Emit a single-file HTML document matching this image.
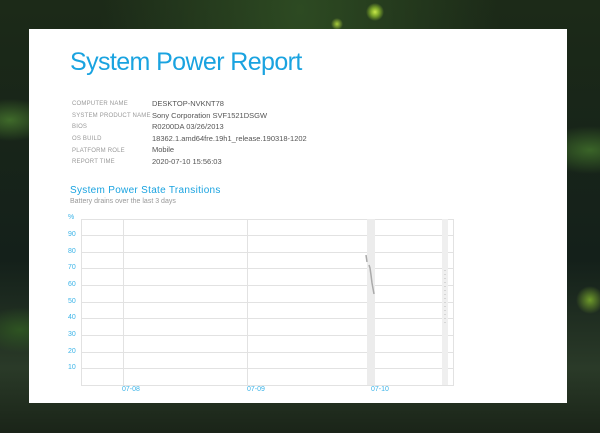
<!DOCTYPE html>
<html><head><style>
body{margin:0;width:600px;height:433px;overflow:hidden;position:relative;font-family:"Liberation Sans",sans-serif;
background:
radial-gradient(circle at 375px 12px,#c8e84a 0,#7fa82a 4px,transparent 9px),
radial-gradient(circle at 337px 24px,#a8cc3a 0,transparent 6px),
radial-gradient(circle at 590px 300px,#6e9a2a 0,transparent 14px),
radial-gradient(ellipse at 10px 120px,#3f6a2a 0,transparent 40px),
radial-gradient(ellipse at 590px 150px,#3a6428 0,transparent 50px),
radial-gradient(ellipse at 20px 330px,#2e5422 0,transparent 40px),
radial-gradient(ellipse at 300px 10px,#2d4a22 0,transparent 200px),
linear-gradient(#1c2a18,#14201a 60%,#2a3a28 85%,#1a2418);}
.paper{position:absolute;left:29px;top:29px;width:538px;height:374px;background:#fff;}
.t{position:absolute;color:#1aa3e0;}
.lab{position:absolute;left:72px;font-size:6px;color:#999;letter-spacing:.2px}
.val{position:absolute;left:152px;font-size:7.5px;color:#555}
.g{position:absolute;left:81px;width:372px;height:1px;background:#e2e2e2}
.v{position:absolute;top:219px;height:166px;width:1px;background:#e2e2e2}
.y{position:absolute;left:68px;font-size:7px;color:#3ab3e8;width:10px}
.x{position:absolute;top:386px;font-size:7px;color:#3ab3e8}
</style></head><body>
<div class="paper"></div>
<div class="t" style="left:70px;top:48px;font-size:25px;letter-spacing:-.6px">System Power Report</div>
<div class="lab" style="top:101px">COMPUTER NAME</div><div class="val" style="top:99px">DESKTOP-NVKNT78</div>
<div class="lab" style="top:113px">SYSTEM PRODUCT NAME</div><div class="val" style="top:111px">Sony Corporation SVF1521DSGW</div>
<div class="lab" style="top:124px">BIOS</div><div class="val" style="top:122px">R0200DA 03/26/2013</div>
<div class="lab" style="top:136px">OS BUILD</div><div class="val" style="top:134px">18362.1.amd64fre.19h1_release.190318-1202</div>
<div class="lab" style="top:148px">PLATFORM ROLE</div><div class="val" style="top:145px">Mobile</div>
<div class="lab" style="top:159px">REPORT TIME</div><div class="val" style="top:157px">2020-07-10 15:56:03</div>
<div class="t" style="left:70px;top:185px;font-size:10px;letter-spacing:.3px">System Power State Transitions</div>
<div style="position:absolute;left:70px;top:198px;font-size:7px;color:#999">Battery drains over the last 3 days</div>
<div style="position:absolute;left:81px;top:219px;width:371px;height:165px;border:1px solid #e2e2e2"></div>
<div class="g" style="top:235px"></div><div class="g" style="top:252px"></div><div class="g" style="top:268px"></div>
<div class="g" style="top:285px"></div><div class="g" style="top:302px"></div><div class="g" style="top:318px"></div>
<div class="g" style="top:335px"></div><div class="g" style="top:352px"></div><div class="g" style="top:368px"></div>
<div class="v" style="left:123px"></div><div class="v" style="left:247px"></div><div class="v" style="left:371px"></div>
<div style="position:absolute;left:367px;top:219px;width:8px;height:166px;background:#ececec"></div>
<div style="position:absolute;left:442px;top:219px;width:6px;height:166px;background:#efefef"></div>
<svg style="position:absolute;left:0;top:0" width="600" height="433"><path d="M366 255 L367 262 M369 265 L370 268 L371 275 L372 283 L374 294" stroke="#aaa" stroke-width="1.5" fill="none"/><path d="M445 270 L445 325" stroke="#bbb" stroke-width="1" stroke-dasharray="1 3"/></svg>
<div class="y" style="top:214px">%</div>
<div class="y" style="top:231px">90</div><div class="y" style="top:248px">80</div><div class="y" style="top:264px">70</div>
<div class="y" style="top:281px">60</div><div class="y" style="top:298px">50</div><div class="y" style="top:314px">40</div>
<div class="y" style="top:331px">30</div><div class="y" style="top:348px">20</div><div class="y" style="top:364px">10</div>
<div class="x" style="left:122px">07-08</div><div class="x" style="left:247px">07-09</div><div class="x" style="left:371px">07-10</div>
</body></html>
